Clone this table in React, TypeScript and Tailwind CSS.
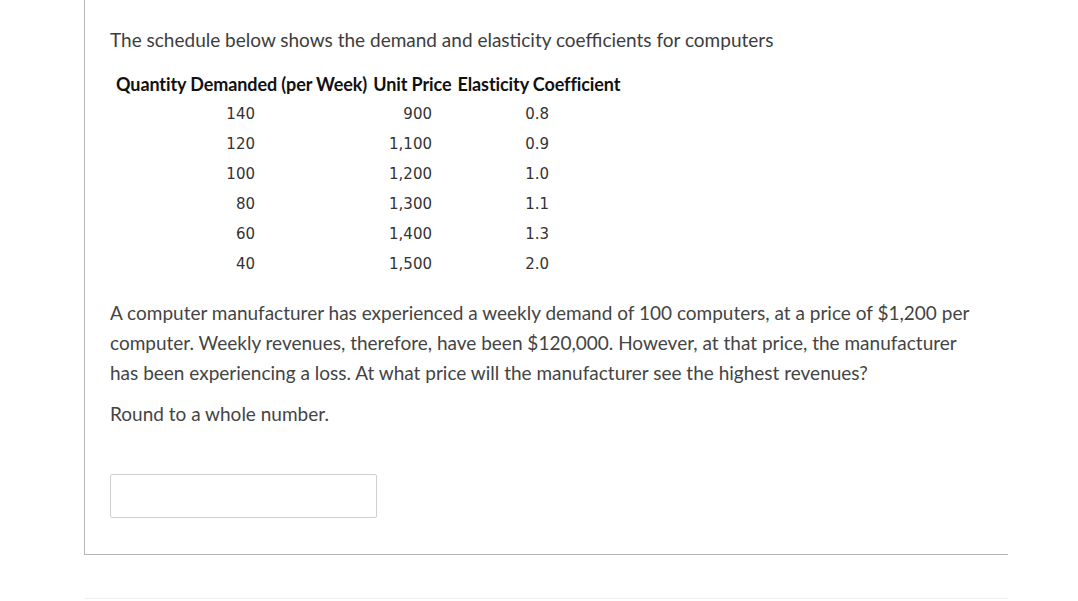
import React from 'react';

const rows = [
  { q: '140', p: '900', e: '0.8' },
  { q: '120', p: '1,100', e: '0.9' },
  { q: '100', p: '1,200', e: '1.0' },
  { q: '80', p: '1,300', e: '1.1' },
  { q: '60', p: '1,400', e: '1.3' },
  { q: '40', p: '1,500', e: '2.0' },
];

export default function App() {
  return (
    <div className="w-[1078px] h-[601px] bg-white overflow-hidden font-['Lato',sans-serif] text-[#3d3d3d]">
      <div className="ml-[84px] w-[924px] h-[555px] border-l border-b border-[#b5b5b5] pl-[25px] pt-[28px]">
        <p className="text-[19px] leading-[24px]">
          The schedule below shows the demand and elasticity coefficients for computers
        </p>

        {/* Table */}
        <div className="mt-[20px] ml-[6px]">
          <div className="flex font-bold text-[#111] text-[18px] leading-[24px] tracking-[-0.1px] gap-[6px]">
            <span>Quantity Demanded (per Week)</span>
            <span>Unit Price</span>
            <span>Elasticity Coefficient</span>
          </div>
          <div className="mt-[3px] font-['DejaVu_Sans',sans-serif] text-[15px] text-[#333]">
            {rows.map((r) => (
              <div key={r.q} className="flex h-[30px] items-center">
                <span className="w-[139px] text-right">{r.q}</span>
                <span className="w-[177px] text-right">{r.p}</span>
                <span className="w-[117px] text-right">{r.e}</span>
              </div>
            ))}
          </div>
        </div>

        <p className="mt-[19px] w-[875px] text-[19px] leading-[30px] text-[#444]">
          A computer manufacturer has experienced a weekly demand of 100 computers, at a price of $1,200 per
          computer. Weekly revenues, therefore, have been $120,000. However, at that price, the manufacturer
          has been experiencing a loss. At what price will the manufacturer see the highest revenues?
        </p>

        <p className="mt-[11px] text-[19px] leading-[30px] text-[#444]">Round to a whole number.</p>

        <input
          type="text"
          className="mt-[45px] block w-[267px] h-[44px] border border-[#cfcfcf] rounded-[2px] bg-white outline-none"
        />
      </div>
      <div className="ml-[84px] mt-[43px] w-[924px] border-t border-[#f0f0f0]" />
    </div>
  );
}
